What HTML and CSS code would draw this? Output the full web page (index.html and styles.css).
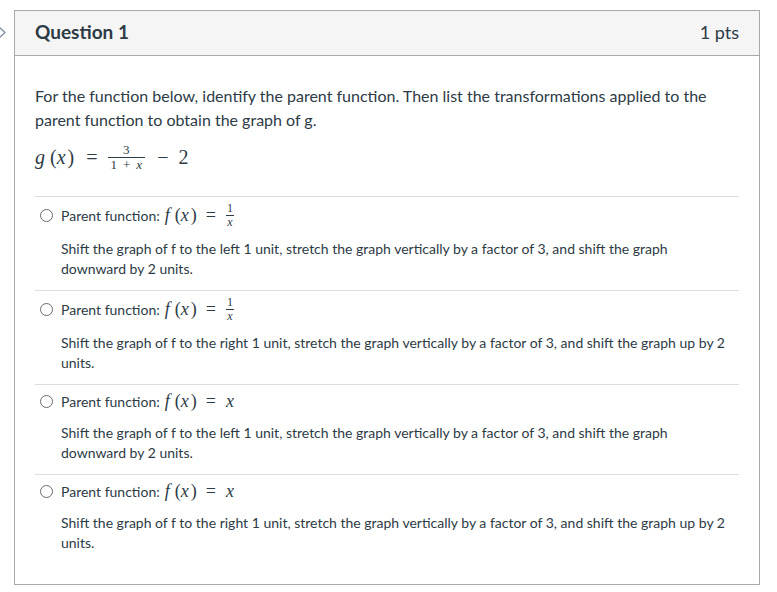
FILE: index.html
```html
<!DOCTYPE html>
<html>
<head>
<meta charset="utf-8">
<link rel="stylesheet" href="styles.css">
</head>
<body>
<div class="page">
  <div class="nav">
    <svg class="chev" width="14" height="16" viewBox="0 0 14 16"><path d="M-2 1 L5 7.5 L-2 14" fill="none" stroke="#7a8a99" stroke-width="1.2"/></svg>
  </div>
  <div class="question">
    <div class="qhead">
      <span class="qtitle">Question 1</span>
      <span class="qpts">1 pts</span>
    </div>
    <div class="qbody">
      <p class="prompt">For the function below, identify the parent function. Then list the transformations applied to the parent function to obtain the graph of g.</p>
      <div class="mathline">
        <span class="m"><i>g</i><span class="sp1"></span>(<i>x</i><span class="sp0"></span>)</span>
        <span class="op">=</span>
        <span class="frac big"><span class="num">3</span><span class="den">1<span class="plus">+</span><i>x</i></span></span>
        <span class="op">−</span>
        <span class="m">2</span>
      </div>
      <div class="answers">
        <div class="answer">
          <div class="label tall"><span class="radio"></span>Parent function: <span class="m fx"><i>f</i><span class="sp1"></span>(<i>x</i><span class="sp0"></span>)</span><span class="op sm">=</span><span class="frac"><span class="num">1</span><span class="den"><i>x</i></span></span></div>
          <div class="desc">Shift the graph of f to the left 1 unit, stretch the graph vertically by a factor of 3, and shift the graph downward by 2 units.</div>
        </div>
        <div class="answer">
          <div class="label tall"><span class="radio"></span>Parent function: <span class="m fx"><i>f</i><span class="sp1"></span>(<i>x</i><span class="sp0"></span>)</span><span class="op sm">=</span><span class="frac"><span class="num">1</span><span class="den"><i>x</i></span></span></div>
          <div class="desc">Shift the graph of f to the right 1 unit, stretch the graph vertically by a factor of 3, and shift the graph up by 2 units.</div>
        </div>
        <div class="answer">
          <div class="label"><span class="radio"></span>Parent function: <span class="m fx"><i>f</i><span class="sp1"></span>(<i>x</i><span class="sp0"></span>)</span><span class="op sm">=</span><span class="m fx nomargin"><i>x</i></span></div>
          <div class="desc">Shift the graph of f to the left 1 unit, stretch the graph vertically by a factor of 3, and shift the graph downward by 2 units.</div>
        </div>
        <div class="answer">
          <div class="label"><span class="radio"></span>Parent function: <span class="m fx"><i>f</i><span class="sp1"></span>(<i>x</i><span class="sp0"></span>)</span><span class="op sm">=</span><span class="m fx nomargin"><i>x</i></span></div>
          <div class="desc">Shift the graph of f to the right 1 unit, stretch the graph vertically by a factor of 3, and shift the graph up by 2 units.</div>
        </div>
      </div>
    </div>
  </div>
</div>
</body>
</html>
```

FILE: styles.css
```css
html, body {
  margin: 0;
  padding: 0;
  background: #ffffff;
}
body {
  font-family: Lato, "Noto Sans", sans-serif;
  color: #2d3b45;
}
.page {
  display: flex;
  align-items: flex-start;
  padding-top: 10px;
}
.nav {
  width: 14px;
  flex: none;
  padding-top: 15px;
}
.chev {
  display: block;
}
.question {
  width: 746px;
  box-sizing: border-box;
  border: 1px solid #a9a9a9;
}
.qhead {
  height: 45px;
  box-sizing: border-box;
  background: #f5f5f5;
  border-bottom: 1px solid #a9a9a9;
  display: flex;
  align-items: center;
  justify-content: space-between;
  padding: 0 20px 3px 20px;
}
.qtitle {
  font-weight: 700;
  font-size: 19px;
  color: #2d3b45;
}
.qpts {
  font-size: 18px;
  color: #2d3b45;
}
.qbody {
  padding: 28px 20px 20px 20px;
}
.prompt {
  margin: 0 0 10px 0;
  font-size: 16px;
  line-height: 24px;
}
.mathline {
  height: 30px;
  display: flex;
  align-items: center;
  font-family: "Liberation Serif", "DejaVu Serif", serif;
  font-size: 20px;
  color: #2d3b45;
  margin-bottom: 24px;
}
.m i, .frac i {
  font-style: italic;
}
.sp1 {
  display: inline-block;
  width: 5px;
}
.sp0 {
  display: inline-block;
  width: 2px;
}
.op {
  margin: 0 10px 0 12px;
}
.op.sm {
  margin: 0 10px 0 9px;
  font-family: "Liberation Serif", "DejaVu Serif", serif;
  font-size: 18px;
}
.frac {
  display: inline-flex;
  flex-direction: column;
  align-items: center;
  font-family: "Liberation Serif", "DejaVu Serif", serif;
  font-size: 12px;
  line-height: 11px;
}
.frac .num {
  padding: 0 1px 1px 1px;
}
.frac .den {
  border-top: 1px solid #2d3b45;
  padding: 1px 1px 0 1px;
  align-self: stretch;
  text-align: center;
}
.frac.big {
  font-size: 13px;
  line-height: 12px;
}
.frac.big .num, .frac.big .den {
  padding-left: 3px;
  padding-right: 3px;
}
.plus {
  margin: 0 6px;
}
.answer {
  border-top: 1px solid #dddddd;
  padding: 4px 0 11px 0;
}
.label {
  height: 24px;
  display: flex;
  align-items: center;
  font-size: 14px;
  color: #2d3b45;
}
.label.tall {
  height: 28px;
}
.fx {
  font-family: "Liberation Serif", "DejaVu Serif", serif;
  font-size: 18px;
  margin-left: 5px;
}
.fx.nomargin {
  margin-left: 0;
}
.radio {
  width: 11px;
  height: 11px;
  border: 1px solid #6b6b6b;
  border-radius: 50%;
  margin: 0 8px 0 5px;
  flex: none;
}
.desc {
  margin: 10px 14px 0 26px;
  font-size: 14px;
  line-height: 20px;
}
```
